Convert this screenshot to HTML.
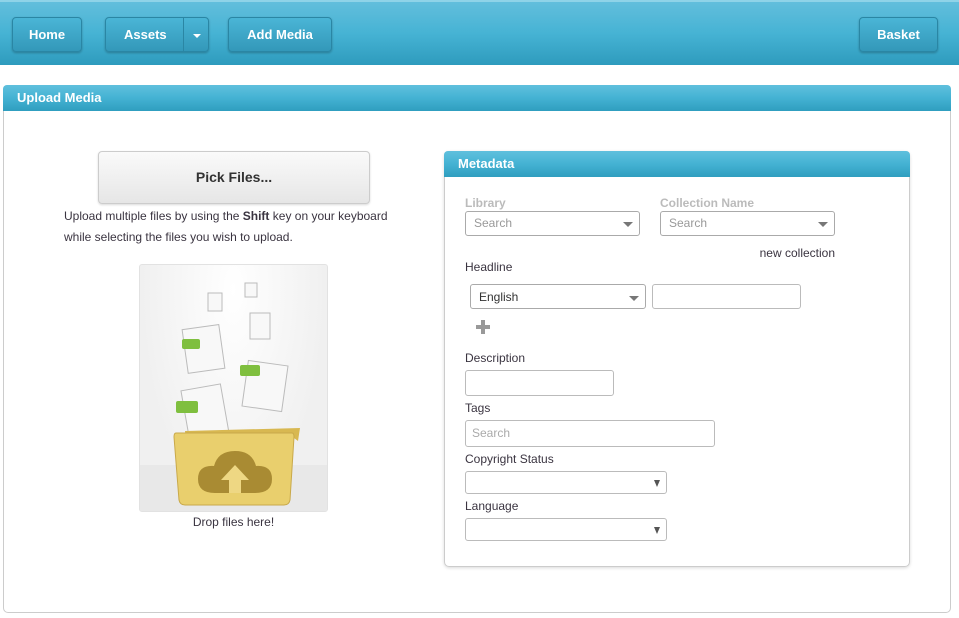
<!DOCTYPE html>
<html><head><meta charset="utf-8"><style>
*{box-sizing:border-box;margin:0;padding:0}
body{width:959px;height:618px;background:#fff;font-family:"Liberation Sans",sans-serif;font-size:12px;color:#3a3440;position:relative;overflow:hidden}
.a{position:absolute}
.hdr{left:0;top:0;width:959px;height:65px;background:linear-gradient(#62bedc,#46b3d4 50%,#2e9bbd);border-top:2px solid #8fd3e8}
.btn{position:absolute;top:17px;height:35px;border:1px solid #2a86a4;border-radius:4px;background:linear-gradient(#4ab5d6,#3398b9);color:#fff;font-weight:bold;font-size:13px;text-align:center;line-height:33px;box-shadow:0 1px 2px rgba(0,0,0,.25)}
.panel{left:3px;top:85px;width:948px;height:528px;border:1px solid #ccc;border-radius:5px}
.ph{background:linear-gradient(#5fc0dd,#44b2d3 50%,#2f9ebf);color:#fff;font-weight:bold;font-size:13px;border-radius:4px 4px 0 0}
.lbl{font-size:12px}
.sel{border:1px solid #aaa;border-radius:3px;background:#fff;color:#999}
.arr{position:absolute;right:6px;top:10px;width:0;height:0;border-left:5px solid transparent;border-right:5px solid transparent;border-top:5px solid #777}
.inp{border:1px solid #bbb;border-radius:3px;background:#fff}
</style></head><body>
<div class="a hdr"></div>
<div class="btn" style="left:12px;width:70px">Home</div>
<div class="btn" style="left:105px;width:104px;text-align:left;padding-left:18px">Assets<div class="a" style="left:77px;top:0;width:1px;height:33px;background:#2a86a4"></div><div class="a" style="left:87px;top:16px;border-left:4px solid transparent;border-right:4px solid transparent;border-top:4px solid #fff"></div></div>
<div class="btn" style="left:228px;width:104px">Add Media</div>
<div class="btn" style="left:859px;width:79px">Basket</div>

<div class="a panel"></div>
<div class="a ph" style="left:3px;top:85px;width:948px;height:26px;padding:5px 14px">Upload Media</div>

<div class="a" style="left:98px;top:151px;width:272px;height:53px;border:1px solid #ccc;border-radius:4px;background:linear-gradient(#fafafa,#e6e6e6);text-align:center;line-height:51px;font-weight:bold;font-size:14px;color:#333;box-shadow:0 1px 2px rgba(0,0,0,.15)">Pick Files...</div>
<div class="a" style="left:64px;top:206px;width:360px;line-height:21px">Upload multiple files by using the <b>Shift</b> key on your keyboard<br>while selecting the files you wish to upload.</div>

<div class="a" style="left:139px;top:264px;width:189px;height:248px;border:1px solid #e2e2e2;border-radius:3px;background:radial-gradient(ellipse at 50% 10%,#fff,#f0f0f0 70%);overflow:hidden">
<div class="a" style="left:0;top:200px;width:189px;height:48px;background:#e8e8e8"></div>
<svg class="a" style="left:0;top:0" width="189" height="248">
<g fill="#f8f8f8" stroke="#bbb">
<rect x="68" y="28" width="14" height="18"/><rect x="105" y="18" width="12" height="14"/><rect x="110" y="48" width="20" height="26"/>
<rect x="45" y="62" width="37" height="44" transform="rotate(-8 63 84)"/>
<rect x="105" y="98" width="40" height="46" transform="rotate(8 125 121)"/>
<rect x="45" y="122" width="40" height="50" transform="rotate(-10 65 147)"/>
</g>
<g fill="#7fbf3f"><rect x="42" y="74" width="18" height="10" rx="2"/><rect x="100" y="100" width="20" height="11" rx="2"/><rect x="36" y="136" width="22" height="12" rx="2"/></g>
<path d="M45 166 L160 163 L158 176 L150 170 L70 170 L46 176Z" fill="#d8b851"/>
<path d="M36 168 H152 Q154 168 154 172 L150 235 Q149 240 144 240 H45 Q40 240 39 235 L34 172 Q34 168 36 168Z" fill="#e9cf6d" stroke="#c9a94a"/>
<path d="M75 228 Q58 228 58 214 Q58 200 74 201 Q78 186 95 186 Q112 186 116 201 Q132 200 132 214 Q132 228 115 228Z" fill="#a98b33"/>
<path d="M95 200 L109 215 H101 V228 H89 V215 H81Z" fill="#eed783"/>
</svg></div>
<div class="a" style="left:139px;top:515px;width:189px;text-align:center">Drop files here!</div>

<div class="a" style="left:444px;top:151px;width:466px;height:416px;border:1px solid #ccc;border-radius:5px;box-shadow:0 1px 3px rgba(0,0,0,.15)"></div>
<div class="a ph" style="left:444px;top:151px;width:466px;height:26px;padding:5px 14px">Metadata</div>

<div class="a lbl" style="left:465px;top:196px;color:#bbb;font-weight:bold">Library</div>
<div class="a lbl" style="left:660px;top:196px;color:#bbb;font-weight:bold">Collection Name</div>
<div class="a sel" style="left:465px;top:211px;width:175px;height:25px;padding:4px 8px">Search<div class="arr"></div></div>
<div class="a sel" style="left:660px;top:211px;width:175px;height:25px;padding:4px 8px">Search<div class="arr"></div></div>
<div class="a" style="left:700px;top:246px;width:135px;text-align:right">new collection</div>
<div class="a lbl" style="left:465px;top:260px">Headline</div>
<div class="a sel" style="left:470px;top:284px;width:176px;height:25px;padding:5px 8px;color:#333">English<div class="arr" style="top:11px"></div></div>
<div class="a inp" style="left:652px;top:284px;width:149px;height:25px"></div>
<div class="a" style="left:476px;top:325px;width:14px;height:4px;background:#999"></div>
<div class="a" style="left:481px;top:320px;width:4px;height:14px;background:#999"></div>
<div class="a lbl" style="left:465px;top:351px">Description</div>
<div class="a inp" style="left:465px;top:370px;width:149px;height:26px"></div>
<div class="a lbl" style="left:465px;top:401px">Tags</div>
<div class="a inp" style="left:465px;top:420px;width:250px;height:27px;padding:5px 6px;color:#aaa">Search</div>
<div class="a lbl" style="left:465px;top:452px">Copyright Status</div>
<div class="a inp" style="left:465px;top:471px;width:202px;height:23px"><div class="arr" style="top:8px;border-left-width:3px;border-right-width:3px;border-top:7px solid #555"></div></div>
<div class="a lbl" style="left:465px;top:499px">Language</div>
<div class="a inp" style="left:465px;top:518px;width:202px;height:23px"><div class="arr" style="top:8px;border-left-width:3px;border-right-width:3px;border-top:7px solid #555"></div></div>
</body></html>
